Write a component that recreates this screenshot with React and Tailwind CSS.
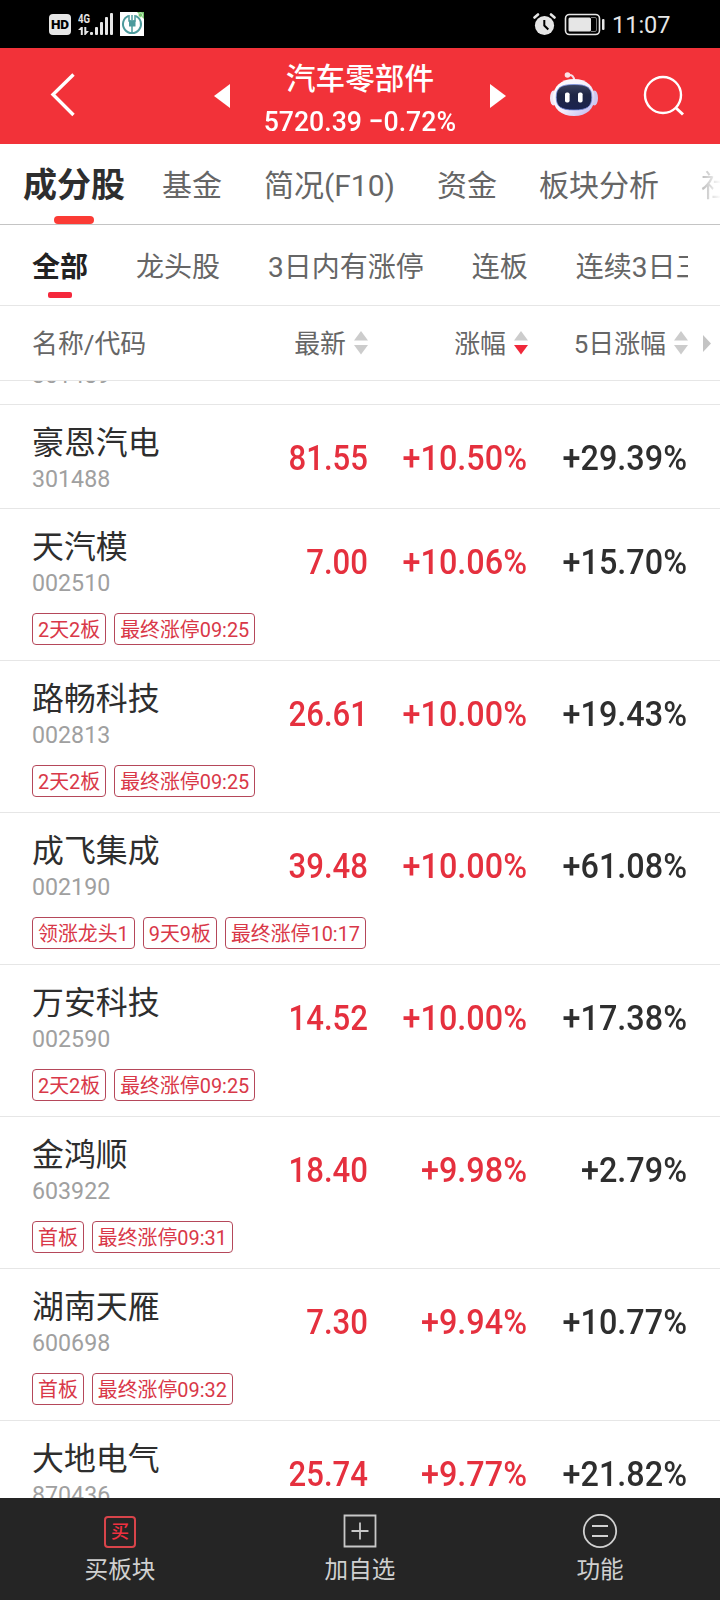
import React from 'react'

const STOCKS = [
  { name: '豪恩汽电', code: '301488', price: '81.55', change: '+10.50%', five: '+29.39%', tags: [] },
  { name: '天汽模', code: '002510', price: '7.00', change: '+10.06%', five: '+15.70%', tags: ['2天2板', '最终涨停09:25'] },
  { name: '路畅科技', code: '002813', price: '26.61', change: '+10.00%', five: '+19.43%', tags: ['2天2板', '最终涨停09:25'] },
  { name: '成飞集成', code: '002190', price: '39.48', change: '+10.00%', five: '+61.08%', tags: ['领涨龙头1', '9天9板', '最终涨停10:17'] },
  { name: '万安科技', code: '002590', price: '14.52', change: '+10.00%', five: '+17.38%', tags: ['2天2板', '最终涨停09:25'] },
  { name: '金鸿顺', code: '603922', price: '18.40', change: '+9.98%', five: '+2.79%', tags: ['首板', '最终涨停09:31'] },
  { name: '湖南天雁', code: '600698', price: '7.30', change: '+9.94%', five: '+10.77%', tags: ['首板', '最终涨停09:32'] },
  { name: '大地电气', code: '870436', price: '25.74', change: '+9.77%', five: '+21.82%', tags: [] },
]

const StatusBar = () => (
  <div className="flex h-12 shrink-0 items-center bg-black text-[#e6e6e6]">
    <div className="ml-[49px] mt-px flex h-[21px] w-[22px] items-center justify-center rounded-[4px] bg-[#e6e6e6] text-[13.5px] font-black text-black">
      HD
    </div>
    <div className="ml-[7px] flex h-6 w-[36px]">
      <svg width="36" height="24" viewBox="0 0 36 24" fill="#e6e6e6">
        <text x="0" y="11" fontSize="13" fontWeight="700" textLength="12" lengthAdjust="spacingAndGlyphs">4G</text>
        <path d="M0 18 3 15h1.800v8H2.800v-5zM6.300 15h2v4H11l-3.500 4H6.300z" />
        <rect x="12" y="20" width="3" height="3" rx="1" />
        <rect x="17" y="15" width="3" height="8" rx="1" />
        <rect x="22" y="10" width="3" height="13" rx="1" />
        <rect x="27" y="5" width="3" height="18" rx="1" />
        <rect x="32" y="1" width="3" height="22" rx="1" />
      </svg>
    </div>
    <svg className="ml-[6px]" width="24" height="24" viewBox="0 0 24 24">
      <rect width="24" height="24" fill="#fff" />
      <path d="M8.500 3.800a9 9 0 1 0 7 0" fill="none" stroke="#4c9a9c" strokeWidth="2" />
      <path d="M9 3v6h6V3M12 3v5M12 12v9" fill="none" stroke="#4c9a9c" strokeWidth="1.500" />
      <rect x="9" y="8.500" width="6.500" height="6" fill="#4c9a9c" />
      <path d="M17 0h7v7z" fill="#74c56c" />
      <circle cx="20.500" cy="3" r="2.200" fill="#74c56c" stroke="#d8f0d4" strokeWidth=".8" />
    </svg>
    <svg className="ml-auto" width="24" height="24" viewBox="0 0 24 24">
      <circle cx="12.500" cy="13.500" r="9.600" fill="#e6e6e6" />
      <path d="M2.500 5.500 6 2.500M19 2.500 22.500 5.500" stroke="#e6e6e6" strokeWidth="2.600" strokeLinecap="round" />
      <path d="M12.300 8v5.500l4 4" fill="none" stroke="#000" strokeWidth="2" />
    </svg>
    <svg className="ml-[8px]" width="42" height="24" viewBox="0 0 42 24">
      <rect x="1.500" y="2.500" width="34" height="20" rx="4" fill="none" stroke="#e6e6e6" strokeWidth="1.600" />
      <rect x="4.500" y="5.500" width="22.500" height="14" rx="1.500" fill="#e6e6e6" />
      <path d="M27 5.500h4q1.500 0 1.500 1.500v11q0 1.500-1.500 1.500h-4" fill="none" stroke="#777" strokeWidth="1" />
      <rect x="38" y="7" width="2.500" height="11" rx="1" fill="#e6e6e6" />
    </svg>
    <span className="ml-[6px] mr-[50px] mt-[2px] w-[58px] whitespace-nowrap text-[23.5px] leading-6">11:07</span>
  </div>
)

const Robot = () => (
  <svg className="ml-[43px]" width="50" height="48" viewBox="0 0 50 48">
    <defs>
      <linearGradient id="shell" x1="0" y1="0" x2="1" y2="1">
        <stop offset="0" stopColor="#fff" />
        <stop offset=".55" stopColor="#f3eefb" />
        <stop offset="1" stopColor="#b9b2ee" />
      </linearGradient>
      <linearGradient id="visor" x1="0" y1="0" x2="0" y2="1">
        <stop offset="0" stopColor="#3b4260" />
        <stop offset=".4" stopColor="#1f2645" />
        <stop offset="1" stopColor="#1b2350" />
      </linearGradient>
    </defs>
    <path d="M19 3c4-.500 6 1 6.300 6" fill="none" stroke="#f6dfe8" strokeWidth="2" />
    <circle cx="18.500" cy="3" r="2.800" fill="#fbe3e8" />
    <ellipse cx="4.500" cy="26" rx="3.500" ry="7.500" fill="#f1e6f3" />
    <ellipse cx="45.500" cy="26" rx="3.500" ry="7.500" fill="#cfc6ef" />
    <path d="M25 7c13 0 20.500 7.500 20.500 18.500S38 44 25 44 4 36.500 4 25.500 12 7 25 7z" fill="url(#shell)" />
    <path d="M25 12.500c13 0 17.800 3 17.800 12.700S38 38 25 38 7.200 34.800 7.200 25.200 12 12.500 25 12.500z" fill="url(#visor)" stroke="#7a8fe0" strokeWidth=".8" />
    <rect x="16" y="20.500" width="4.600" height="10" rx="1.800" fill="#fff" />
    <rect x="29" y="20.500" width="4.600" height="10" rx="1.800" fill="#fff" />
  </svg>
)

const Header = () => (
  <header className="flex h-24 shrink-0 items-center bg-[#f23239]">
    <svg className="ml-[48px]" width="30" height="48" viewBox="0 0 30 48" fill="none" stroke="#fff" strokeWidth="3.400">
      <path d="M25.500 2.500 5 22.500 25.500 43" />
    </svg>
    <svg className="ml-[136px]" width="16" height="24" viewBox="0 0 16 24" fill="#fff">
      <path d="M16 0v24L0 12z" />
    </svg>
    <div className="flex w-[260px] flex-col items-center pt-[9px] text-white">
      <h1 className="text-[29.6px] font-medium leading-[40px]">汽车零部件</h1>
      <p className="origin-center scale-x-[.935] whitespace-nowrap pt-[2px] text-[28.5px] font-medium leading-[42px]">5720.39 −0.72%</p>
    </div>
    <svg width="16" height="24" viewBox="0 0 16 24" fill="#fff">
      <path d="M0 0v24l16-12z" />
    </svg>
    <Robot />
    <svg className="ml-[44px]" width="44" height="44" viewBox="0 0 44 44" fill="none" stroke="#fff" strokeWidth="2.400">
      <circle cx="20" cy="21" r="18" />
      <path d="m32.500 33.500 7.500 7" strokeWidth="3" />
    </svg>
  </header>
)

const MainTabs = () => (
  <nav className="flex h-[81px] shrink-0 overflow-hidden whitespace-nowrap border-b border-[#c4c4c4] pl-[23px] text-[30px] leading-[83px] text-[#666]">
    <div className="relative mr-[37px] text-[34px] font-bold text-[#2e2e2e]">
      成分股
      <span className="absolute left-[31px] top-[72px] h-2 w-10 rounded-full bg-[#fb3b35]"></span>
    </div>
    <div className="mr-[42px]">基金</div>
    <div className="mr-[42px]">简况(F10)</div>
    <div className="mr-[42px]">资金</div>
    <div className="mr-[42px]">板块分析</div>
    <div className="bg-linear-to-r from-[#bbb] to-white to-[20px] bg-clip-text text-transparent">社区</div>
  </nav>
)

const Filters = () => (
  <div className="flex h-[81px] shrink-0 border-b border-[#e6e6e6] px-8 text-[28px] leading-[86px] text-[#666]">
    <div className="flex gap-12 overflow-hidden whitespace-nowrap">
      <div className="relative shrink-0 font-bold text-[#222]">
        全部
        <span className="absolute left-4 top-[67px] h-1.5 w-6 rounded-[2px] bg-[#f5283c]"></span>
      </div>
      <div className="shrink-0">龙头股</div>
      <div className="shrink-0">3日内有涨停</div>
      <div className="shrink-0">连板</div>
      <div className="shrink-0">连续3日三连阳</div>
    </div>
  </div>
)

const Sort = ({ active }) => (
  <svg className="mb-[2px] ml-2" width="14" height="24" viewBox="0 0 14 24">
    <path d="M7 0 14 9.500H0z" fill="#ccc" />
    <path d="M7 23.500 0 14h14z" fill={active ? '#f0283a' : '#ccc'} />
  </svg>
)

const ColumnHead = () => (
  <div className="flex h-[75px] shrink-0 items-center border-b border-[#e6e6e6] pl-8 pt-[2px] text-[25.9px] text-[#666]">
    <div className="w-[176px]">名称/代码</div>
    <div className="flex w-[160px] items-center justify-end">最新<Sort /></div>
    <div className="flex w-[160px] items-center justify-end">涨幅<Sort active /></div>
    <div className="flex w-[160px] items-center justify-end">5日涨幅<Sort /></div>
    <svg className="mb-[2px] ml-[15px]" width="8" height="17" viewBox="0 0 8 17">
      <path d="M0 0v17l8-8.500z" fill="#c4c4c4" />
    </svg>
  </div>
)

const Figure = ({ className, children }) => (
  <div className={`w-[160px] origin-right text-right text-[35px] font-medium leading-[42px] ${className}`}>{children}</div>
)

const StockRow = ({ stock }) => (
  <div className="shrink-0 border-b border-[#e6e6e6] px-8">
    <div className="flex h-[103px]">
      <div className="w-[176px] pt-[17px]">
        <div className="text-[31.9px] leading-[42px] text-[#2e2e2e]">{stock.name}</div>
        <div className="text-[23.2px] leading-[30px] text-[#a0a0a0]">{stock.code}</div>
      </div>
      <div className="flex pt-[33px]">
        <Figure className="scale-x-[.89] text-[#e5303e]">{stock.price}</Figure>
        <Figure className="-ml-px scale-x-[.925] text-[#e5303e]">{stock.change}</Figure>
        <Figure className="scale-x-[.925] text-[#2e2e2e]">{stock.five}</Figure>
      </div>
    </div>
    {stock.tags.length > 0 && (
      <div className="flex h-12 gap-2 pt-px">
        {stock.tags.map((tag) => (
          <span key={tag} className="h-8 rounded-[4px] border border-[#b5485a] px-[5px] pt-px text-[19.9px] leading-[32px] text-[#d93848]">
            {tag}
          </span>
        ))}
      </div>
    )}
  </div>
)

const BottomItem = ({ icon, label }) => (
  <div className="flex flex-1 flex-col items-center pt-4 text-[#d0d0d0]">
    <div className="flex h-9 items-center">{icon}</div>
    <span className="text-[23.6px] leading-[40px]">{label}</span>
  </div>
)

const BottomBar = () => (
  <footer className="flex h-[102px] shrink-0 bg-[#252525]">
    <BottomItem
      label="买板块"
      icon={<span className="flex h-8 w-8 items-center justify-center rounded-[4px] border-2 border-[#d8444a] text-[18px] font-medium leading-none text-[#f03040]">买</span>}
    />
    <BottomItem
      label="加自选"
      icon={
        <svg className="mb-[2px]" width="34" height="34" viewBox="0 0 34 34" fill="none" stroke="#c8c8c8" strokeWidth="1.800">
          <path d="M1.500 1.500h31v31h-31zM17 8.500v17M8.500 17h17" />
        </svg>
      }
    />
    <BottomItem
      label="功能"
      icon={
        <svg width="36" height="36" viewBox="0 0 36 36" fill="none" stroke="#d0d0d0" strokeWidth="1.800">
          <circle cx="18" cy="17" r="16.200" />
          <path d="M10 12h16M10 22h16" />
        </svg>
      }
    />
  </footer>
)

const App = () => (
  <div className="flex h-[1600px] w-[720px] flex-col overflow-hidden bg-white font-[Roboto,'Noto_Sans_CJK_SC',sans-serif]">
    <StatusBar />
    <Header />
    <MainTabs />
    <Filters />
    <ColumnHead />
    <main className="flex min-h-0 flex-1 flex-col overflow-hidden">
      {/* tail of the row scrolled under the column head */}
      <div className="flex h-6 shrink-0 items-end overflow-hidden border-b border-[#e6e6e6] px-8 pb-[12px] text-[23.2px] leading-[34px] text-[#a0a0a0]">
        301489
      </div>
      {STOCKS.map((s) => (
        <StockRow key={s.code} stock={s} />
      ))}
    </main>
    <BottomBar />
  </div>
)

export default App
